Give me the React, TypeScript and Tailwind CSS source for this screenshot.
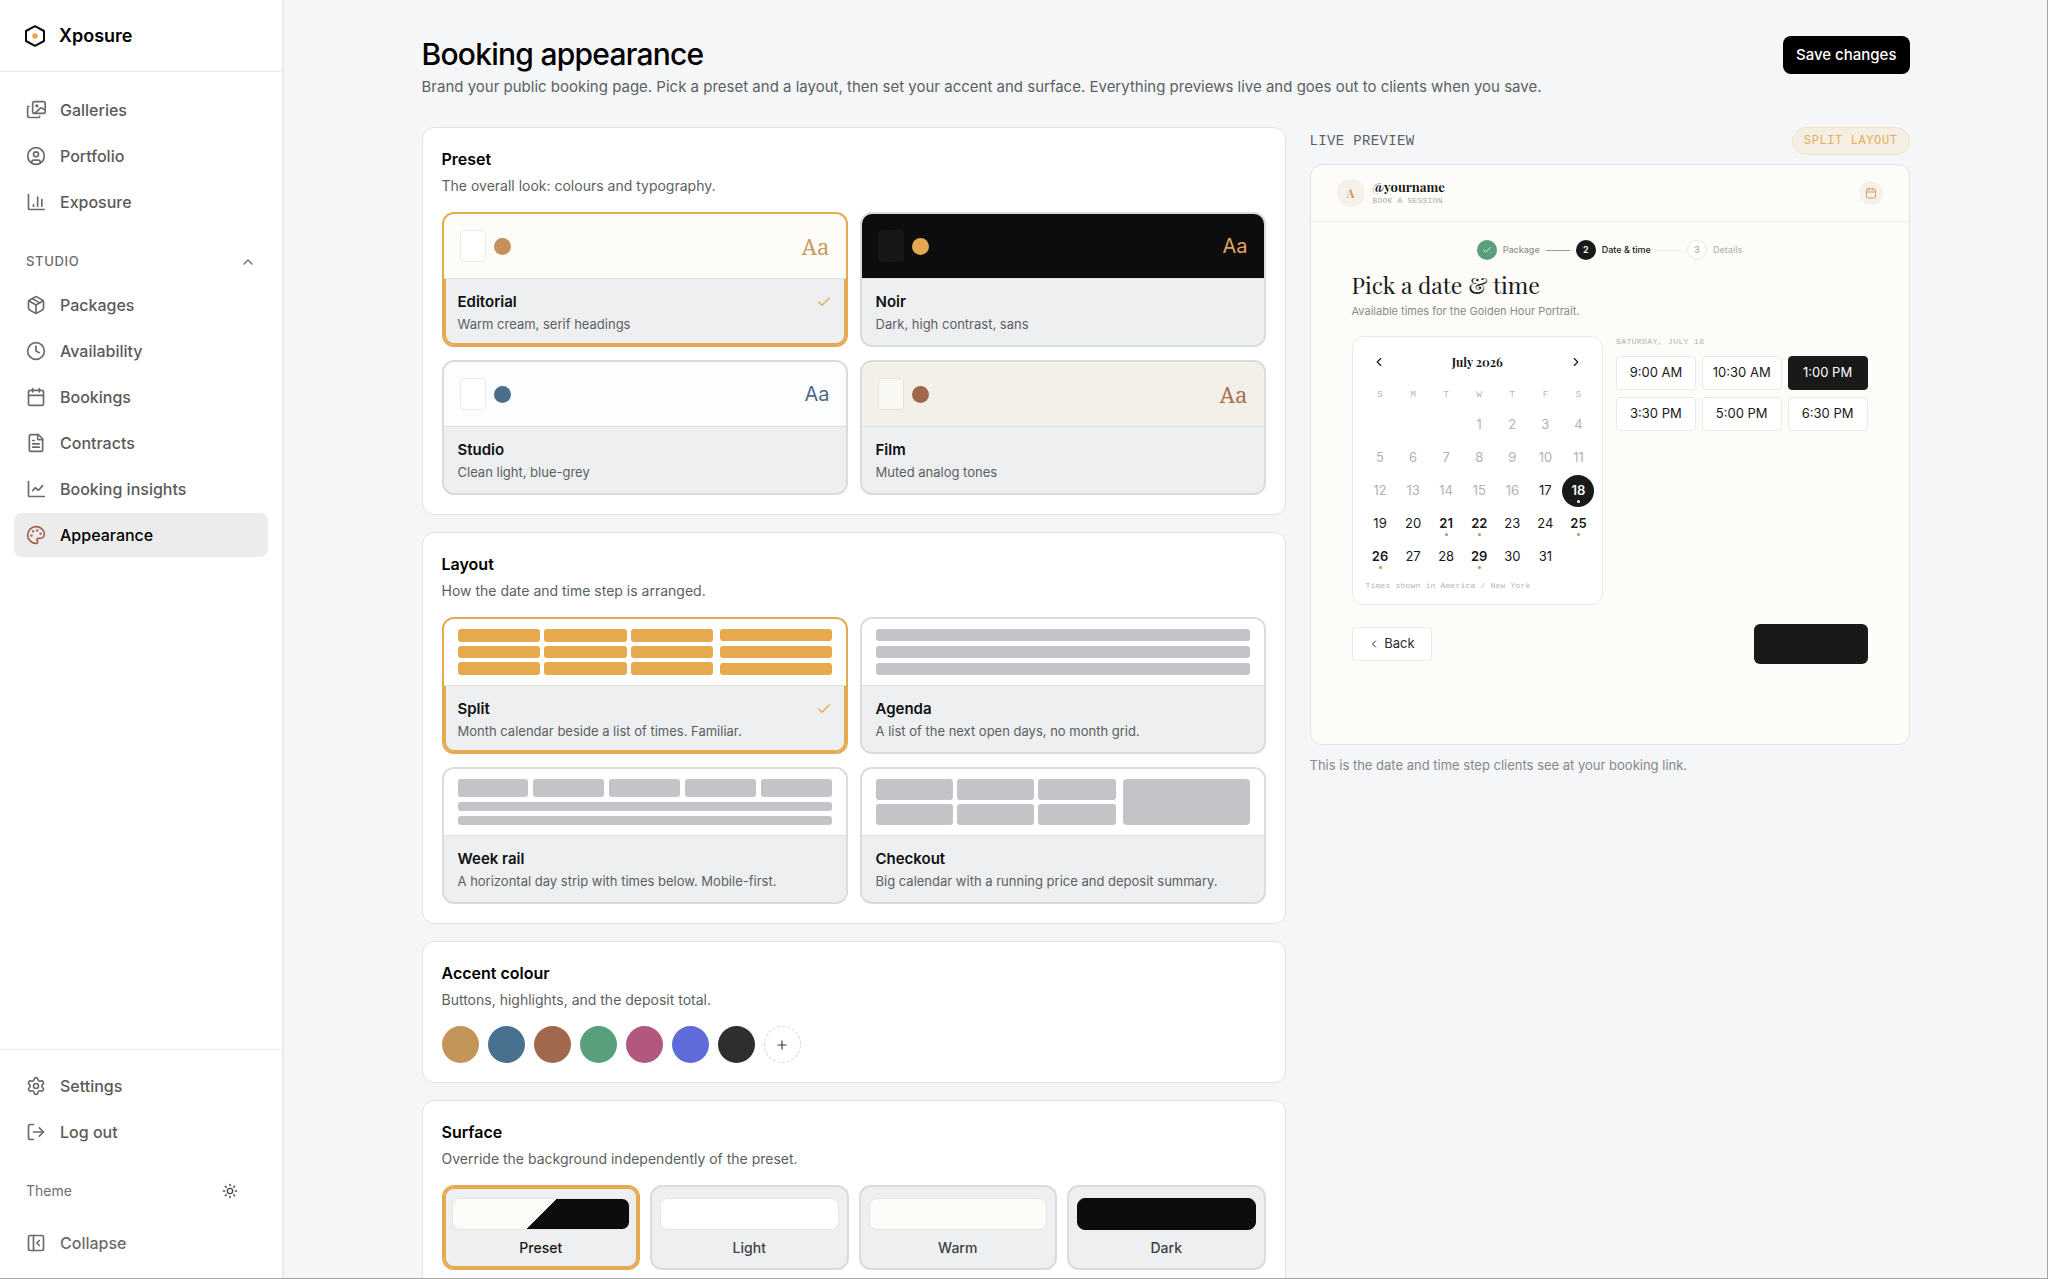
import { useState } from "react";
import type { ReactNode } from "react";
import clsx from "clsx";
import {
  Calendar,
  Check,
  ChevronLeft,
  ChevronRight,
  ChevronUp,
  CircleUser,
  Clock,
  FileText,
  LogOut,
  Package,
  Palette,
  PanelLeftClose,
  Plus,
  Settings,
  Sun,
} from "lucide-react";

function StrokeIcon({ children }: { children: ReactNode }) {
  return (
    <svg
      viewBox="0 0 24 24"
      fill="none"
      stroke="currentColor"
      strokeWidth={2}
      strokeLinecap="round"
      strokeLinejoin="round"
      className="size-5 shrink-0"
      aria-hidden="true"
    >
      {children}
    </svg>
  );
}

const GalleryIcon = () => (
  <StrokeIcon>
    <rect x="8" y="2" width="15" height="14" rx="2" />
    <circle cx="13" cy="7" r="1" />
    <path d="m10.500 16 6.500-6a2 2 0 0 1 2.400 0L23 12" />
    <path d="M3.500 7.500H3a1 1 0 0 0-1 1V19a2 2 0 0 0 2 2h11a1.500 1.500 0 0 0 1.500-1.500" />
  </StrokeIcon>
);

const BarsIcon = () => (
  <StrokeIcon>
    <path d="M3 3v17a1 1 0 0 0 1 1h18" />
    <path d="M9 17v-2M14 17V6M19 17V9" />
  </StrokeIcon>
);

const TrendIcon = () => (
  <StrokeIcon>
    <path d="M3 3v17a1 1 0 0 0 1 1h18" />
    <path d="m8 14 3-3.500 4 3 5-5.500" />
  </StrokeIcon>
);

const iconClass = "size-5 shrink-0";

const mainNav = [
  { label: "Galleries", icon: <GalleryIcon /> },
  { label: "Portfolio", icon: <CircleUser className={iconClass} /> },
  { label: "Exposure", icon: <BarsIcon /> },
];

const studioNav = [
  { label: "Packages", icon: <Package className={iconClass} /> },
  { label: "Availability", icon: <Clock className={iconClass} /> },
  { label: "Bookings", icon: <Calendar className={iconClass} /> },
  { label: "Contracts", icon: <FileText className={iconClass} /> },
  { label: "Booking insights", icon: <TrendIcon /> },
  { label: "Appearance", icon: <Palette className={iconClass} />, active: true },
];

const presets = [
  {
    name: "Editorial",
    text: "Warm cream, serif headings",
    bg: "bg-[#fdfcf8]",
    card: "bg-white border-[#eceae4]",
    dot: "bg-[#c4915a]",
    aa: "text-[22px] text-[#cb9a5f] font-['Noto_Serif','DejaVu_Serif',serif]",
  },
  {
    name: "Noir",
    text: "Dark, high contrast, sans",
    bg: "bg-[#0d0d0e]",
    card: "bg-[#171717] border-[#171717]",
    dot: "bg-[#e5a84e]",
    aa: "text-xl text-[#e0a560]",
  },
  {
    name: "Studio",
    text: "Clean light, blue-grey",
    bg: "bg-[#fcfdfd]",
    card: "bg-white border-[#e8ebec]",
    dot: "bg-[#4a6e8c]",
    aa: "text-xl text-[#4f6a85]",
  },
  {
    name: "Film",
    text: "Muted analog tones",
    bg: "bg-[#f3f0ea]",
    card: "bg-[#faf8f3] border-[#e6e2da]",
    dot: "bg-[#a0674b]",
    aa: "text-[22px] text-[#a8714f] font-['Noto_Serif','DejaVu_Serif',serif]",
  },
];

const layouts = [
  { name: "Split", text: "Month calendar beside a list of times. Familiar." },
  { name: "Agenda", text: "A list of the next open days, no month grid." },
  { name: "Week rail", text: "A horizontal day strip with times below. Mobile-first." },
  { name: "Checkout", text: "Big calendar with a running price and deposit summary." },
];

const accents = [
  { name: "Sand", color: "bg-[#c49559]" },
  { name: "Blue", color: "bg-[#48708f]" },
  { name: "Clay", color: "bg-[#a0694b]" },
  { name: "Green", color: "bg-[#5a9f7b]" },
  { name: "Rose", color: "bg-[#b2577e]" },
  { name: "Indigo", color: "bg-[#5f6bd8]" },
  { name: "Ink", color: "bg-[#2e2e2e]" },
];

const surfaces = [
  {
    name: "Preset",
    fill: "border-[#e6e5e0] bg-[linear-gradient(135deg,#fdfcf8_50%,#0d0d0e_50%)]",
  },
  { name: "Light", fill: "border-[#e4e6e7] bg-white" },
  { name: "Warm", fill: "border-[#e8e6e0] bg-[#fdfcf8]" },
  { name: "Dark", fill: "border-[#0d0d0e] bg-[#0d0d0e]" },
];

const slots = ["9:00 AM", "10:30 AM", "1:00 PM", "3:30 PM", "5:00 PM", "6:30 PM"];
const popularDays = [18, 21, 22, 25, 26, 29];

function NavItem({ label, icon, active }: { label: string; icon: ReactNode; active?: boolean }) {
  return (
    <a
      href="#"
      aria-current={active ? "page" : undefined}
      className={clsx(
        "flex h-11 items-center gap-3.5 rounded-lg px-3 text-base font-medium",
        active ? "bg-[#ececec] text-black" : "text-[#5a5a5a]"
      )}
    >
      <span className={clsx("flex", active ? "text-[#a0624a]" : "text-[#6b6b6b]")}>{icon}</span>
      {label}
    </a>
  );
}

function Sidebar() {
  return (
    <aside className="flex w-[284px] shrink-0 flex-col border-r-2 border-[#e8eaeb] bg-white">
      <div className="flex h-[72px] items-center gap-3 border-b border-[#e9ebeb] px-[23px]">
        <svg viewBox="0 0 24 24" className="size-6" aria-hidden="true">
          <path
            d="M12 2.200 21 7v10l-9 4.800L3 17V7Z"
            fill="none"
            stroke="#0a0a0a"
            strokeWidth="2"
            strokeLinejoin="round"
          />
          <circle cx="12" cy="12" r="2.800" fill="#e9a750" />
        </svg>
        <span className="text-lg font-semibold text-black">Xposure</span>
      </div>
      <nav className="flex-1 px-3.5 pt-4" aria-label="Main">
        <div className="flex flex-col gap-0.5">
          {mainNav.map((item) => (
            <NavItem key={item.label} {...item} />
          ))}
        </div>
        <button className="mt-[21px] flex h-[34px] w-full items-center justify-between px-3 text-[13px] font-medium tracking-wider text-[#6b6b6b]">
          STUDIO
          <ChevronUp className="size-4" />
        </button>
        <div className="mt-1 flex flex-col gap-0.5">
          {studioNav.map((item) => (
            <NavItem key={item.label} {...item} />
          ))}
        </div>
      </nav>
      <div className="border-t border-[#e9ebeb] px-3.5 pt-3.5 pb-[13px]">
        <div className="flex flex-col gap-0.5">
          <NavItem label="Settings" icon={<Settings className={iconClass} />} />
          <NavItem label="Log out" icon={<LogOut className={iconClass} />} />
        </div>
        <div className="mt-[15px] flex h-11 items-center justify-between pr-[30px] pl-3 text-sm text-[#6f6f6f]">
          Theme
          <button aria-label="Switch theme" className="text-[#4a4a4a]">
            <Sun className="size-4" />
          </button>
        </div>
        <button className="mt-2 flex h-11 w-full items-center gap-3.5 px-3 text-base font-medium text-[#6b6b6b]">
          <PanelLeftClose className={iconClass} />
          Collapse
        </button>
      </div>
    </aside>
  );
}

function Section({ title, text, children }: { title: string; text: string; children: ReactNode }) {
  return (
    <section className="rounded-xl border border-[#dfe3e6] bg-white px-[19px] pt-5 pb-[19px]">
      <h2 className="text-base leading-[22px] font-semibold text-black">{title}</h2>
      <p className="mt-1.5 mb-4 text-sm leading-5 text-[#5c5f61]">{text}</p>
      {children}
    </section>
  );
}

function OptionCard({
  name,
  text,
  selected,
  onSelect,
  children,
}: {
  name: string;
  text: string;
  selected: boolean;
  onSelect: () => void;
  children: ReactNode;
}) {
  return (
    <button
      aria-pressed={selected}
      onClick={onSelect}
      className={clsx(
        "overflow-hidden rounded-xl border-2 bg-[#eeeff1] text-left",
        selected ? "border-[#e5a94f] shadow-[inset_0_0_0_2px_#e5a94f]" : "border-[#d9dcdd]"
      )}
    >
      {children}
      <div className="px-3.5 pt-3 pb-2.5">
        <div className="flex items-center justify-between">
          <span className="text-[15px] leading-[22px] font-semibold text-[#0f0f0f]">{name}</span>
          {selected && <Check className="size-4 text-[#e5a94f]" />}
        </div>
        <p className="text-[13px] leading-[22px] text-[#5c5f61]">{text}</p>
      </div>
    </button>
  );
}

function Bars({ count, className }: { count: number; className: string }) {
  return (
    <>
      {Array.from({ length: count }, (_, i) => (
        <div key={i} className={clsx("rounded-[3px]", className)} />
      ))}
    </>
  );
}

function LayoutThumb({ name, selected }: { name: string; selected: boolean }) {
  const fill = selected ? "bg-[#e7a94d]" : "bg-[#c2c4c7]";
  return (
    <div className="border-b border-[#dfe1e3] bg-white px-3.5 py-2.5">
      {name === "Split" && (
        <div className="grid h-[46px] grid-cols-[16fr_7fr] gap-1.5">
          <div className="grid grid-cols-3 gap-1">
            <Bars count={9} className={fill} />
          </div>
          <div className="grid gap-[5px]">
            <Bars count={3} className={fill} />
          </div>
        </div>
      )}
      {name === "Agenda" && (
        <div className="grid h-[46px] gap-[5px]">
          <Bars count={3} className={fill} />
        </div>
      )}
      {name === "Week rail" && (
        <div className="flex h-[46px] flex-col gap-[5px]">
          <div className="grid h-[18px] grid-cols-5 gap-[5px]">
            <Bars count={5} className={fill} />
          </div>
          <Bars count={2} className={clsx("flex-1", fill)} />
        </div>
      )}
      {name === "Checkout" && (
        <div className="grid h-[46px] grid-cols-[19fr_10fr] gap-[7px]">
          <div className="grid grid-cols-3 gap-1">
            <Bars count={6} className={fill} />
          </div>
          <div className={clsx("rounded", fill)} />
        </div>
      )}
    </div>
  );
}

function Stepper() {
  const dot = "flex size-5 items-center justify-center rounded-full text-[9px] font-semibold";
  return (
    <div className="flex items-center justify-center text-[9px]">
      <span className={clsx(dot, "bg-[#5a9f7b] text-white")}>
        <Check className="size-2.5" />
      </span>
      <span className="ml-1.5 font-medium text-[#8f8f8c]">Package</span>
      <span className="mx-1.5 h-px w-6 bg-[#9b9b98]" />
      <span className={clsx(dot, "bg-[#191919] text-white")}>2</span>
      <span className="ml-1.5 font-medium text-[#191919]">Date &amp; time</span>
      <span className="mx-1.5 h-px w-6 bg-[#ebeae6]" />
      <span className={clsx(dot, "border border-[#e8e7e3] bg-white text-[#b5b5b2]")}>3</span>
      <span className="ml-1.5 font-medium text-[#b5b5b2]">Details</span>
    </div>
  );
}

function MonthCalendar({ day, onPick }: { day: number; onPick: (d: number) => void }) {
  return (
    <div className="rounded-xl border border-[#ebeae6] bg-white pt-[13px] pr-[7px] pb-3 pl-[11px]">
      <div className="flex h-6 items-center justify-between pr-3 pl-2">
        <button aria-label="Previous month">
          <ChevronLeft className="size-3.5" />
        </button>
        <span className="font-['Playfair_Display','Liberation_Serif',serif] text-xs font-bold text-[#191919]">
          July 2026
        </span>
        <button aria-label="Next month">
          <ChevronRight className="size-3.5" />
        </button>
      </div>
      <div className="mt-3.5 grid h-4 grid-cols-7 items-center text-center font-['Liberation_Mono',monospace] text-[9px] text-[#b5b5b2]">
        {["S", "M", "T", "W", "T", "F", "S"].map((d, i) => (
          <span key={i}>{d}</span>
        ))}
      </div>
      <div className="mt-[5px] grid grid-cols-7 justify-items-center gap-y-px">
        {Array.from({ length: 31 }, (_, i) => i + 1).map((d) => (
          <button
            key={d}
            disabled={d < 17}
            onClick={() => onPick(d)}
            className={clsx(
              "relative flex size-8 items-center justify-center rounded-full text-[13px]",
              d === 1 && "col-start-4",
              d < 17 && "text-[#b3b3b1]",
              popularDays.includes(d) && "font-semibold",
              d === day ? "bg-[#191919] text-white" : d >= 17 && "text-[#191919]"
            )}
          >
            {d}
            {popularDays.includes(d) && (
              <span
                className={clsx(
                  "absolute bottom-1 size-[3px] rounded-full",
                  d === day ? "bg-white" : "bg-[#c4915a]"
                )}
              />
            )}
          </button>
        ))}
      </div>
      <p className="mt-[7px] px-0.5 font-['Liberation_Mono',monospace] text-[8px] leading-3 tracking-wide text-[#b5b5b2]">
        Times shown in America / New York
      </p>
    </div>
  );
}

function Preview() {
  const [day, setDay] = useState(18);
  const [slot, setSlot] = useState("1:00 PM");
  return (
    <div className="mt-[9px] rounded-xl border border-[#e2e4e4] bg-[#fdfcf8] pb-20">
      <div className="flex h-[57px] items-center border-b border-[#efeeea] px-[26px]">
        <span className="flex size-7 items-center justify-center rounded-full bg-[#f5f2ec] font-['Playfair_Display','Liberation_Serif',serif] text-xs font-bold text-[#cf9d5f]">
          A
        </span>
        <div className="ml-2 flex-1">
          <div className="font-['Playfair_Display','Liberation_Serif',serif] text-[13px] leading-4 font-bold text-[#191919]">
            @yourname
          </div>
          <div className="font-['Liberation_Mono',monospace] text-[8px] leading-3 tracking-wide text-[#a9aba9]">
            BOOK A SESSION
          </div>
        </div>
        <button
          aria-label="Calendar"
          className="flex size-6 items-center justify-center rounded-full bg-[#f5f2ec] text-[#d3a060]"
        >
          <Calendar className="size-3" />
        </button>
      </div>
      <div className="px-[41px] pt-[18px]">
        <Stepper />
        <h2 className="mt-[9px] font-['Playfair_Display','Liberation_Serif',serif] text-[23px] leading-8 text-[#191919]">
          Pick a date &amp; time
        </h2>
        <p className="mt-px text-[11px] leading-[18px] text-[#8b8b88]">
          Available times for the Golden Hour Portrait.
        </p>
        <div className="mt-4 grid grid-cols-2 items-start gap-[13px]">
          <MonthCalendar day={day} onPick={setDay} />
          <div>
            <p className="font-['Liberation_Mono',monospace] text-[8px] leading-3 tracking-wider text-[#b0b0ad]">
              SATURDAY, JULY {day}
            </p>
            <div className="mt-2 grid grid-cols-3 gap-x-1.5 gap-y-[7px]">
              {slots.map((s) => (
                <button
                  key={s}
                  onClick={() => setSlot(s)}
                  className={clsx(
                    "h-[34px] rounded border text-[13px]",
                    s === slot
                      ? "border-[#191919] bg-[#191919] text-white"
                      : "border-[#ebeae6] bg-white text-[#191919]"
                  )}
                >
                  {s}
                </button>
              ))}
            </div>
          </div>
        </div>
        <div className="mt-[19px] flex items-center justify-between">
          <button className="flex h-[34px] w-20 items-center justify-center gap-1 rounded border border-[#ebeae6] bg-white text-[13px] text-[#2b2b2b]">
            <ChevronLeft className="size-3" />
            Back
          </button>
          <button aria-label="Continue" className="h-10 w-[114px] rounded-md bg-[#191919]" />
        </div>
      </div>
    </div>
  );
}

export default function App() {
  const [preset, setPreset] = useState("Editorial");
  const [layout, setLayout] = useState("Split");
  const [surface, setSurface] = useState("Preset");

  return (
    <div className="flex h-screen overflow-hidden border-r border-b border-[#a3a5a6] bg-[#f5f6f8] font-['Inter',sans-serif] text-[#191919]">
      <Sidebar />
      <main className="min-w-0 flex-1 overflow-hidden px-6 pt-9">
        <div className="mx-auto max-w-[1488px]">
          <header className="flex items-start justify-between">
            <div>
              <h1 className="text-[30px] leading-9 font-medium tracking-tight text-black">
                Booking appearance
              </h1>
              <p className="mt-[3px] text-[15px] leading-6 text-[#5c5f61]">
                Brand your public booking page. Pick a preset and a layout, then set your accent and
                surface. Everything previews live and goes out to clients when you save.
              </p>
            </div>
            <button className="h-[38px] shrink-0 rounded-lg bg-black px-[13px] text-[15px] font-medium text-white">
              Save changes
            </button>
          </header>

          <div className="mt-7 grid grid-cols-[minmax(0,36fr)_minmax(0,25fr)] items-start gap-6">
            <div className="flex flex-col gap-[17px]">
              <Section title="Preset" text="The overall look: colours and typography.">
                <div className="grid grid-cols-2 gap-x-3 gap-y-[13px]">
                  {presets.map((p) => (
                    <OptionCard
                      key={p.name}
                      name={p.name}
                      text={p.text}
                      selected={preset === p.name}
                      onSelect={() => setPreset(p.name)}
                    >
                      <div
                        className={clsx(
                          "flex h-[65px] items-center gap-2 border-b border-[#dfe1e3] px-4",
                          p.bg
                        )}
                      >
                        <span className={clsx("h-8 w-[26px] rounded border", p.card)} />
                        <span className={clsx("size-[17px] rounded-full", p.dot)} />
                        <span className={clsx("ml-auto", p.aa)}>Aa</span>
                      </div>
                    </OptionCard>
                  ))}
                </div>
              </Section>

              <Section title="Layout" text="How the date and time step is arranged.">
                <div className="grid grid-cols-2 gap-x-3 gap-y-[13px]">
                  {layouts.map((l) => (
                    <OptionCard
                      key={l.name}
                      name={l.name}
                      text={l.text}
                      selected={layout === l.name}
                      onSelect={() => setLayout(l.name)}
                    >
                      <LayoutThumb name={l.name} selected={layout === l.name} />
                    </OptionCard>
                  ))}
                </div>
              </Section>

              <Section title="Accent colour" text="Buttons, highlights, and the deposit total.">
                <div className="flex gap-[9px]">
                  {accents.map((a) => (
                    <button
                      key={a.name}
                      aria-label={a.name}
                      className={clsx("size-[37px] rounded-full", a.color)}
                    />
                  ))}
                  <button
                    aria-label="Custom colour"
                    className="flex size-[37px] items-center justify-center rounded-full border border-dashed border-[#cfd2d4] text-[#3d3d3d]"
                  >
                    <Plus className="size-3.5" />
                  </button>
                </div>
              </Section>

              <Section title="Surface" text="Override the background independently of the preset.">
                <div className="grid grid-cols-4 gap-2.5">
                  {surfaces.map((s) => (
                    <button
                      key={s.name}
                      aria-pressed={surface === s.name}
                      onClick={() => setSurface(s.name)}
                      className={clsx(
                        "rounded-xl border-2 bg-[#eeeff1] px-2 pt-[11px] pb-2.5 text-sm leading-5 font-medium",
                        surface === s.name
                          ? "border-[#e5a94f] text-[#191919] shadow-[inset_0_0_0_2px_#e5a94f]"
                          : "border-[#d9dcdd] text-[#3f4144]"
                      )}
                    >
                      <span className={clsx("mb-2 block h-8 rounded-lg border", s.fill)} />
                      {s.name}
                    </button>
                  ))}
                </div>
              </Section>
            </div>

            <div>
              <div className="flex h-7 items-center justify-between font-['Liberation_Mono',monospace]">
                <span className="text-sm tracking-wide text-[#5c5f61]">LIVE PREVIEW</span>
                <span className="rounded-full border border-[#f3e2c8] bg-[#f5eee2] px-[11px] text-xs leading-[26px] tracking-wider text-[#e5ae5c]">
                  SPLIT LAYOUT
                </span>
              </div>
              <Preview />
              <p className="mt-2.5 text-[13px] leading-5 text-[#85888b]">
                This is the date and time step clients see at your booking link.
              </p>
            </div>
          </div>
        </div>
      </main>
    </div>
  );
}
